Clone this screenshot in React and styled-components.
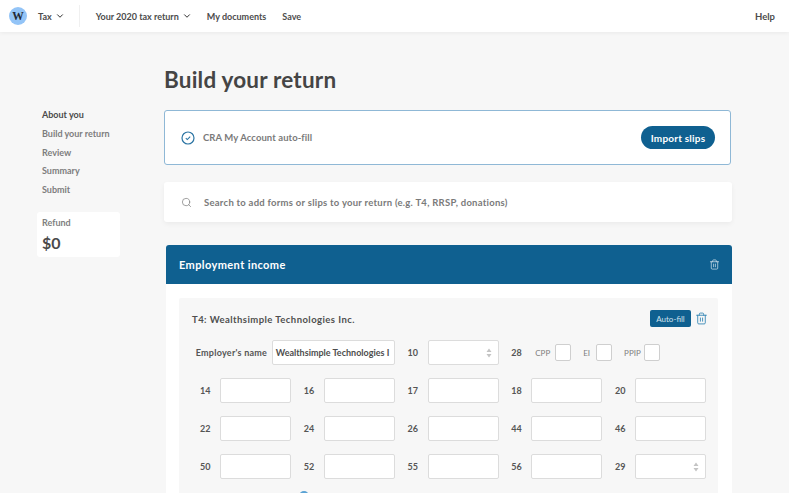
import React from 'react';
import styled, { createGlobalStyle } from 'styled-components';
import { ChevronDown, Search, Trash2 } from 'lucide-react';

const Global = createGlobalStyle`
  html, body { margin: 0; padding: 0; background: #f7f7f7; }
  body { font-family: "Lato", "Liberation Sans", sans-serif; color: #4a4a4a; }
  * { box-sizing: border-box; }
`;
const Page = styled.div`
  width: 789px; height: 493px; overflow: hidden; background: #f7f7f7;
`;
const TopBar = styled.header`
  height: 32px; background: #fff; display: flex; align-items: center;
  padding: 0 14px 0 9px; box-shadow: 0 1px 4px rgba(0,0,0,.06);
  font-size: 9px; font-weight: 700; color: #4c4c4c; position: relative;
`;
const Logo = styled.div`
  width: 18px; height: 18px; border-radius: 50%; background: #93c4f7; color: #222a35;
  display: flex; align-items: center; justify-content: center;
  font: 700 11.5px "Liberation Serif", serif; margin-right: 11px;
`;
const NavItem = styled.span`
  display: inline-flex; align-items: center; gap: 3px; margin-right: ${p => p.$gap || 0}px;
  white-space: nowrap;
`;
const Chevron = styled(ChevronDown)`color: #333; flex: none;`;
const Divider = styled.div`
  width: 1px; height: 22px; background: #f0f0f0; margin: 0 16px 0 14px;
`;
const Help = styled.span`margin-left: auto; font-size: 9.5px;`;
const Body = styled.div`display: flex; align-items: flex-start;`;
const Sidebar = styled.aside`
  width: 164px; padding: 78px 44px 0 37px; flex: none;
`;
const Steps = styled.nav`
  display: flex; flex-direction: column; gap: 8.8px; padding-left: 5px; margin-bottom: 17px;
`;
const Step = styled.div`
  font-size: 9px; line-height: 10px; font-weight: 700;
  color: ${p => p.$active ? '#4a4a4a' : '#7d7d7d'};
`;
const RefundCard = styled.div`
  width: 83px; height: 45px; background: #fff; border-radius: 3px; padding: 5px 5px;
`;
const RefundLabel = styled.div`font-size: 9px; line-height: 11px; font-weight: 700; color: #808080;`;
const RefundValue = styled.div`font-size: 16px; line-height: 17px; font-weight: 700; color: #4a4a4a; margin-top: 5.5px;`;
const Main = styled.main`width: 568px; flex: none;`;
const Title = styled.h1`
  margin: 34px 0 0; font-size: 22.5px; line-height: 27px; font-weight: 700; color: #454545;
  letter-spacing: 0.2px;
`;
const ImportCard = styled.section`
  margin-top: 17px; height: 55px; width: 567px; background: #fff; border: 1px solid #8fb8d6; border-radius: 3px;
  display: flex; align-items: center; padding: 0 15px 0 16px;
`;
const CardText = styled.span`
  margin-left: 8px; font-size: 9.5px; font-weight: 700; color: #7a7a7a; letter-spacing: .08px;
`;
const PillButton = styled.button`
  margin-left: auto; width: 74px; height: 23px; border: 0; border-radius: 12px; background: #0f6090;
  color: #fff; font: 700 10px "Lato", sans-serif; letter-spacing: .2px; padding: 0;
`;
const SearchCard = styled.section`
  margin-top: 17px; height: 40px; background: #fff; border-radius: 3px;
  box-shadow: 0 2px 5px rgba(0,0,0,.05);
  display: flex; align-items: center; padding: 0 0 0 17px; color: #7f7f7f;
`;
const SearchText = styled.span`
  margin-left: 12px; font-size: 9.5px; font-weight: 700; color: #7a7a7a; letter-spacing: .26px;
`;
const IncomePanel = styled.section`
  margin: 23px 0 0 2px; width: 566px; background: #fff; border-radius: 3px 3px 0 0; padding-bottom: 14px;
`;
const PanelHead = styled.div`
  height: 39px; background: #0f6090; color: #fff; border-radius: 3px 3px 0 0;
  display: flex; align-items: center; justify-content: space-between; padding: 0 12px 0 13px;
  font-size: 11px; font-weight: 700; letter-spacing: .4px;
`;
const Slip = styled.div`
  margin: 14px 14px 0 13px; background: #f7f7f7; padding: 12px 12px 12px 13px; border-radius: 2px 2px 0 0;
`;
const SlipHead = styled.div`
  display: flex; align-items: center; height: 17px;
`;
const SlipTitle = styled.h2`
  margin: 1px 0 0; font-size: 9.5px; font-weight: 700; color: #4f4f4f; letter-spacing: .44px;
`;
const SmallButton = styled.button`
  margin-left: auto; margin-right: 4px; width: 41px; height: 17px; border: 0; border-radius: 2px; background: #0f6090;
  color: #cfe2ee; font: 400 8px "Lato", sans-serif; padding: 0;
`;
const SlipTrash = styled(Trash2)`color: #2f83b3; margin-right: -2px; flex: none;`;
const FormGrid = styled.div`
  display: grid; grid-template-columns: repeat(5, 91px); column-gap: 12.75px; row-gap: 13px;
  grid-auto-rows: 25px; margin: 13px 0 0 8px;
`;
const Cell = styled.div`
  display: flex; align-items: center; grid-column: span ${p => p.$span || 1};
  justify-content: ${p => p.$end ? 'flex-end' : 'flex-start'}; white-space: nowrap;
`;
const FieldLabel = styled.label`
  width: ${p => p.$w || 20}px; flex: none; font-size: 9px; font-weight: 700; color: #555;
  margin-right: ${p => p.$mr || 0}px; letter-spacing: ${p => p.$track || 0}px;
`;
const Input = styled.div`
  width: ${p => p.$w || 71}px; height: 25px; flex: none; background: #fff; border: 1px solid #dcdcdc; border-radius: 2px;
  display: flex; align-items: center; padding: 0 3px; font-size: 9px; font-weight: 700; color: #4d4d4d;
  overflow: hidden; white-space: nowrap;
`;
const Spin = styled.svg`margin-left: auto; margin-right: 3px; flex: none;`;
const Tick = styled.span`font-size: 8px; color: #808080; margin-right: ${p => p.$mr}px;`;
const Box = styled.div`
  width: 16px; height: 17px; flex: none; background: #fff; border: 1px solid #cfcfcf; border-radius: 2px;
  margin-right: ${p => p.$mr || 0}px;
`;
const Peek = styled.div`
  width: 10px; height: 10px; border-radius: 50%; background: #5ba3d4; margin: 12px 0 0 107px;
`;

const Spinner = () => (
  <Spin width="6" height="10" viewBox="0 0 6 10" fill="#c4c4c4"><path d="M3 0.5 5.5 4H.5zM3 9.5.5 6h5z" /></Spin>
);
const CheckCircle = () => (
  <svg width="14" height="14" viewBox="0 0 14 14" fill="none" stroke="#2b74a3">
    <circle cx="7" cy="7" r="6" strokeWidth="1.2" />
    <path d="M4.8 7.2 6.3 8.6 9.2 5.6" strokeWidth="1.1" />
  </svg>
);
const Field = ({ n, spin }) => (
  <Cell><FieldLabel>{n}</FieldLabel><Input>{spin && <Spinner />}</Input></Cell>
);

export default function App() {
  return (
    <Page>
      <Global />
      <TopBar>
        <Logo>W</Logo>
        <NavItem>Tax <Chevron size={10} strokeWidth={2.4} /></NavItem>
        <Divider />
        <NavItem $gap={15}>Your 2020 tax return <Chevron size={10} strokeWidth={2.4} /></NavItem>
        <NavItem $gap={16}>My documents</NavItem>
        <NavItem>Save</NavItem>
        <Help>Help</Help>
      </TopBar>
      <Body>
        <Sidebar>
          <Steps>
            <Step $active>About you</Step>
            <Step>Build your return</Step>
            <Step>Review</Step>
            <Step>Summary</Step>
            <Step>Submit</Step>
          </Steps>
          <RefundCard>
            <RefundLabel>Refund</RefundLabel>
            <RefundValue>$0</RefundValue>
          </RefundCard>
        </Sidebar>
        <Main>
          <Title>Build your return</Title>
          <ImportCard>
            <CheckCircle />
            <CardText>CRA My Account auto-fill</CardText>
            <PillButton>Import slips</PillButton>
          </ImportCard>
          <SearchCard>
            <Search size={11} strokeWidth={1.6} />
            <SearchText>Search to add forms or slips to your return (e.g. T4, RRSP, donations)</SearchText>
          </SearchCard>
          <IncomePanel>
            <PanelHead>
              Employment income
              <Trash2 size={11} strokeWidth={1.5} color="#dfeaf2" />
            </PanelHead>
            <Slip>
              <SlipHead>
                <SlipTitle>T4: Wealthsimple Technologies Inc.</SlipTitle>
                <SmallButton>Auto-fill</SmallButton>
                <SlipTrash size={13} strokeWidth={1.6} />
              </SlipHead>
              <FormGrid>
                <Cell $span={2} $end>
                  <FieldLabel $w={72} $mr={4} $track={0.25}>Employer's name</FieldLabel>
                  <Input $w={123}>Wealthsimple Technologies I</Input>
                </Cell>
                <Field n="10" spin />
                <Cell $span={2}>
                  <FieldLabel $w={24}>28</FieldLabel>
                  <Tick $mr={5}>CPP</Tick><Box $mr={12} />
                  <Tick $mr={6}>EI</Tick><Box $mr={12} />
                  <Tick $mr={3}>PPIP</Tick><Box />
                </Cell>
                {['14','16','17','18','20','22','24','26','44','46','50','52','55','56'].map(n => <Field key={n} n={n} />)}
                <Field n="29" spin />
              </FormGrid>
              <Peek />
            </Slip>
          </IncomePanel>
        </Main>
      </Body>
    </Page>
  );
}
